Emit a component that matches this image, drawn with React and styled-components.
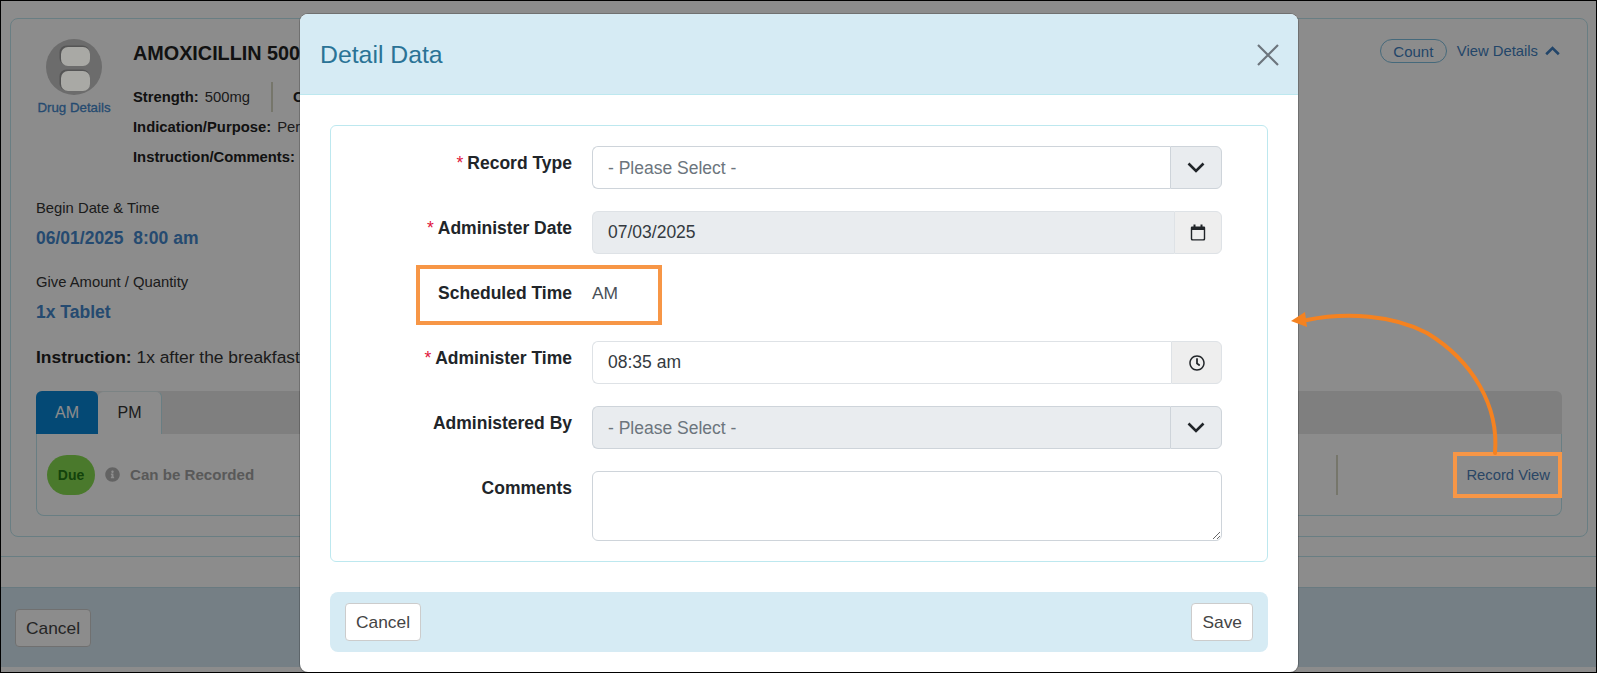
import React from "react";
import styled, { createGlobalStyle } from "styled-components";
import { FaInfoCircle, FaRegClock } from "react-icons/fa";

const GlobalStyle = createGlobalStyle`
    html, body {
        margin:0;
        padding:0;
        background:#fff;
        font-family:"Liberation Sans", Arial, sans-serif;
    }
    * {
        box-sizing:border-box;
    }
`

const Page = styled.div`
    position:relative;
    width:1597px;
    height:673px;
    overflow:hidden;
    border:1px solid #000;
    background:#fff;
    color:#212529;
    display:flex;
    flex-direction:column;
`

const Card = styled.section`
    margin:17px 8px 0 9px;
    height:519px;
    flex:none;
    padding:20px 25px 0;
    border:1px solid #bfe6ee;
    border-radius:8px;
`

const CardTop = styled.div`
    display:flex;
    align-items:flex-start;
    justify-content:space-between;
`

const DrugColumn = styled.div`
    width:76px;
    flex:none;
    display:flex;
    flex-direction:column;
    align-items:center;
    gap:5px;
`

const DrugPicture = styled.svg`
    position:relative;
    z-index:1;
`

const DrugLink = styled.a`
    font-size:13.3px;
    line-height:16px;
    white-space:nowrap;
    color:#4488cc;
    -webkit-text-stroke:0.3px #4488cc;
`

const DrugInfo = styled.div`
    flex:1;
    margin-left:21px;
`

const DrugName = styled.h1`
    margin:0;
    height:43px;
    font-size:19.8px;
    line-height:28px;
    font-weight:bold;
    white-space:nowrap;
    color:#222;
`

const InfoLine = styled.div`
    height:30px;
    display:flex;
    align-items:center;
    font-size:14.8px;
    gap:6px;
    color:#333;

    b {
        color:#222;
    }
`

const InfoDivider = styled.span`
    width:2px;
    height:30px;
    margin:0 14px 0 15px;
    background:#d8d8c4;
`

const TopActions = styled.div`
    display:flex;
    align-items:center;
    gap:10px;
    height:24px;
    font-size:14.8px;
    color:#3f7fc0;
`

const CountPill = styled.span`
    width:67px;
    height:24px;
    display:flex;
    align-items:center;
    justify-content:center;
    font-size:15px;
    border:1px solid #7fc0e0;
    border-radius:12px;
`

const ViewDetails = styled.span`
    display:flex;
    align-items:center;
    gap:7px;
    margin-right:2px;
    color:#3f7fc0;
`

const InfoBlock = styled.div`
    margin-top:${props => props.$top}px;
`

const BlockLabel = styled.div`
    font-size:14.8px;
    line-height:20px;
    color:#333;
`

const BlockValue = styled.div`
    margin-top:9px;
    font-size:17.5px;
    line-height:22px;
    font-weight:bold;
    white-space:pre;
    color:#4488cc;
`

const Instruction = styled.div`
    margin-top:23px;
    font-size:17.4px;
    line-height:22px;
    color:#333;

    b {
        color:#222;
    }
`

const Tabs = styled.div`
    margin-top:23px;
`

const TabBar = styled.div`
    display:flex;
    height:43px;
    background:#e7e7e7;
    border-radius:6px 6px 0 0;
`

const Tab = styled.div`
    display:flex;
    align-items:center;
    justify-content:center;
    width:${props => props.$active ? "62px" : "64px"};
    font-size:16px;
    border-radius:6px 6px 0 0;
    color:${props => props.$active ? "#fff" : "#333"};
    background:${props => props.$active ? "#0886d6" : "#fff"};
    border-right:${props => props.$active ? "0" : "1px solid #bfe6ee"};
    border-top:${props => props.$active ? "0" : "1px solid #e0eef0"};
`

const TabBody = styled.div`
    height:82px;
    display:flex;
    align-items:center;
    padding:0 11px 0 10px;
    border:1px solid #bfe6ee;
    border-top:0;
    border-radius:0 0 8px 8px;
`

const DuePill = styled.span`
    width:48px;
    height:40px;
    display:flex;
    align-items:center;
    justify-content:center;
    border-radius:20px;
    font-size:14px;
    font-weight:bold;
    background:#88dd50;
    color:#237a15;
`

const StatusIcon = styled.span`
    display:flex;
    margin:0 10px 0 10px;
    font-size:15px;
    color:#b5b5b5;
`

const StatusText = styled.span`
    flex:1;
    font-size:15.1px;
    font-weight:bold;
    color:#a3a3a3;
`

const BodyDivider = styled.span`
    width:2px;
    height:40px;
    margin-right:128px;
    background:#d8d8c4;
`

const RecordLink = styled.a`
    font-size:14.8px;
    color:#4d80b8;
`

const PageRule = styled.div`
    margin-top:19px;
    flex:none;
    height:1px;
    background:#bfe6ee;
`

const PageFooter = styled.footer`
    margin-top:30px;
    height:80px;
    flex:none;
    padding:21px 14px;
    background:#d6e8f3;
    border-top:1px solid #bfdfe9;
`

const Button = styled.button`
    height:38px;
    padding:0 10px;
    font:17.35px "Liberation Sans", Arial, sans-serif;
    color:#444;
    background:#fff;
    border:1px solid #ccc;
    border-radius:4px;
`

const Backdrop = styled.div`
    position:absolute;
    inset:0;
    background:rgba(0,0,0,0.45);
`

const Modal = styled.div`
    position:absolute;
    left:299px;
    top:13px;
    width:998px;
    height:658px;
    display:flex;
    flex-direction:column;
    background:#fff;
    border-radius:8px;
    overflow:hidden;
    box-shadow:0 0 0 1px rgba(0,0,0,0.2);
`

const ModalHeader = styled.header`
    height:81px;
    flex:none;
    display:flex;
    align-items:center;
    justify-content:space-between;
    padding:2px 19px 0 20px;
    background:#d6ebf4;
    border-bottom:1px solid #bde8ef;
`

const ModalTitle = styled.h2`
    margin:0;
    font-size:24.8px;
    font-weight:normal;
    color:#2a7396;
`

const ModalBody = styled.div`
    padding:30px 30px 0;
`

const FormPanel = styled.div`
    height:437px;
    padding:20px 0 0 0;
    border:1px solid #bde8ef;
    border-radius:6px;
    display:flex;
    flex-direction:column;
    gap:22px;
`

const FormRow = styled.div`
    display:grid;
    grid-template-columns:241px 630px;
    column-gap:20px;
    min-height:${props => props.$height || 43}px;
`

const FormLabel = styled.label`
    padding-top:5px;
    font-size:17.5px;
    line-height:24px;
    font-weight:bold;
    text-align:right;
    white-space:nowrap;
    color:#212529;
`

const Required = styled.span`
    margin-right:4px;
    font-weight:normal;
    color:#e0143c;
`

const PlainValue = styled.div`
    padding-top:5px;
    font-size:17.4px;
    line-height:24px;
    color:#495057;
`

const InputGroup = styled.div`
    display:flex;
    height:43px;
`

const SelectBox = styled.select`
    flex:1;
    min-width:0;
    padding:0 15px;
    appearance:none;
    font:17.5px "Liberation Sans", Arial, sans-serif;
    color:#6c757d;
    background:${props => props.disabled ? "#e9ecef" : "#fff"};
    opacity:1;
    border:1px solid #ced4da;
    border-right:0;
    border-radius:6px 0 0 6px;
`

const TextInput = styled.input`
    flex:1;
    min-width:0;
    padding:0 15px;
    font:17.5px "Liberation Sans", Arial, sans-serif;
    color:#343a40;
    background:${props => props.$filled ? "#e9ecef" : "#fff"};
    border:1px solid #dee2e6;
    border-right:0;
    border-radius:6px 0 0 6px;
`

const Addon = styled.span`
    flex:none;
    width:${props => props.$width}px;
    display:flex;
    align-items:center;
    justify-content:center;
    color:#212529;
    background:${props => props.$select ? "#e9ecef" : "#eee"};
    border:1px solid ${props => props.$select ? "#ced4da" : "#dee2e6"};
    border-radius:0 6px 6px 0;
`

const TextArea = styled.textarea`
    display:block;
    width:630px;
    height:70px;
    font:17.4px "Liberation Sans", Arial, sans-serif;
    background:#fff;
    border:1px solid #ced4da;
    border-radius:6px;
`

const ModalFooter = styled.div`
    margin:30px 30px 0;
    height:60px;
    display:flex;
    align-items:center;
    justify-content:space-between;
    padding:0 15px;
    background:#d6ebf4;
    border-radius:8px;
`

const Highlight = styled.div`
    position:absolute;
    border:4px solid #f79646;
    left:${props => props.$left}px;
    top:${props => props.$top}px;
    width:${props => props.$width}px;
    height:${props => props.$height}px;
`

const ArrowLayer = styled.svg`
    position:absolute;
    left:0;
    top:0;
    width:1595px;
    height:671px;
    pointer-events:none;
`

const CloseIcon = () => (
    <svg width="22" height="22" viewBox="0 0 22 22">
        <path d="M1 1 L21 21 M21 1 L1 21" fill="none" stroke="#6c757d" strokeWidth="2.2" />
    </svg>
)

const ChevronDown = () => (
    <svg width="18" height="11" viewBox="0 0 18 11">
        <path d="M1.5 1.5 L9 9 L16.5 1.5" fill="none" stroke="#212529" strokeWidth="2.6" />
    </svg>
)

const ChevronUp = () => (
    <svg width="15" height="10" viewBox="0 0 15 10">
        <path d="M1.2 8.2 L7.5 2 L13.8 8.2" fill="none" stroke="currentColor" strokeWidth="2.6" />
    </svg>
)

const CalendarIcon = () => (
    <svg width="16" height="17" viewBox="0 0 16 17">
        <path d="M3.5 0.5 h2 v2 h5 v-2 h2 v2 H14 a1.2 1.2 0 0 1 1.2 1.2 V15 a1.5 1.5 0 0 1 -1.5 1.5 H2.3 A1.5 1.5 0 0 1 0.8 15 V3.7 A1.2 1.2 0 0 1 2 2.5 H3.5 Z M2.2 6 V14.4 a0.8 0.8 0 0 0 0.8 0.8 H13 a0.8 0.8 0 0 0 0.8 -0.8 V6 Z" fill="#212529" fillRule="evenodd" />
    </svg>
)

const PillImage = () => (
    <DrugPicture width="56" height="56" viewBox="0 0 56 56">
        <circle cx="28" cy="28" r="28" fill="#6c6c6c" />
        <rect x="13.5" y="6.5" width="30" height="19.5" rx="7" fill="#555" />
        <rect x="15" y="8" width="29" height="19" rx="7" fill="#a9a9a5" />
        <rect x="13.5" y="30.5" width="30" height="21" rx="7" fill="#555" />
        <rect x="15" y="32" width="29" height="20" rx="7" fill="#a9a9a5" />
    </DrugPicture>
)

const App = () => {
    return (
        <Page>
            <GlobalStyle />
            <Card>
                <CardTop>
                    <DrugColumn>
                        <PillImage />
                        <DrugLink>Drug Details</DrugLink>
                    </DrugColumn>
                    <DrugInfo>
                        <DrugName>AMOXICILLIN 500mg</DrugName>
                        <InfoLine>
                            <b>Strength:</b> 500mg
                            <InfoDivider />
                            <b>Class:</b>
                        </InfoLine>
                        <InfoLine><b>Indication/Purpose:</b> Pernicious</InfoLine>
                        <InfoLine><b>Instruction/Comments:</b> 1x</InfoLine>
                    </DrugInfo>
                    <TopActions>
                        <CountPill>Count</CountPill>
                        <ViewDetails>View Details <ChevronUp /></ViewDetails>
                    </TopActions>
                </CardTop>
                <InfoBlock $top={26}>
                    <BlockLabel>Begin Date &amp; Time</BlockLabel>
                    <BlockValue>06/01/2025  8:00 am</BlockValue>
                </InfoBlock>
                <InfoBlock $top={23}>
                    <BlockLabel>Give Amount / Quantity</BlockLabel>
                    <BlockValue>1x Tablet</BlockValue>
                </InfoBlock>
                <Instruction><b>Instruction:</b> 1x after the breakfast</Instruction>
                <Tabs>
                    <TabBar>
                        <Tab $active>AM</Tab>
                        <Tab>PM</Tab>
                    </TabBar>
                    <TabBody>
                        <DuePill>Due</DuePill>
                        <StatusIcon><FaInfoCircle /></StatusIcon>
                        <StatusText>Can be Recorded</StatusText>
                        <BodyDivider />
                        <RecordLink>Record View</RecordLink>
                    </TabBody>
                </Tabs>
            </Card>
            <PageRule />
            <PageFooter>
                <Button>Cancel</Button>
            </PageFooter>
            <Backdrop />
            <Modal>
                <ModalHeader>
                    <ModalTitle>Detail Data</ModalTitle>
                    <CloseIcon />
                </ModalHeader>
                <ModalBody>
                    <FormPanel>
                        <FormRow>
                            <FormLabel><Required>*</Required>Record Type</FormLabel>
                            <InputGroup>
                                <SelectBox defaultValue="">
                                    <option value="">- Please Select -</option>
                                </SelectBox>
                                <Addon $width={52} $select><ChevronDown /></Addon>
                            </InputGroup>
                        </FormRow>
                        <FormRow>
                            <FormLabel><Required>*</Required>Administer Date</FormLabel>
                            <InputGroup>
                                <TextInput $filled readOnly value="07/03/2025" />
                                <Addon $width={48}><CalendarIcon /></Addon>
                            </InputGroup>
                        </FormRow>
                        <FormRow>
                            <FormLabel>Scheduled Time</FormLabel>
                            <PlainValue>AM</PlainValue>
                        </FormRow>
                        <FormRow>
                            <FormLabel><Required>*</Required>Administer Time</FormLabel>
                            <InputGroup>
                                <TextInput readOnly value="08:35 am" />
                                <Addon $width={51}><FaRegClock size={16} /></Addon>
                            </InputGroup>
                        </FormRow>
                        <FormRow>
                            <FormLabel>Administered By</FormLabel>
                            <InputGroup>
                                <SelectBox disabled defaultValue="">
                                    <option value="">- Please Select -</option>
                                </SelectBox>
                                <Addon $width={52} $select><ChevronDown /></Addon>
                            </InputGroup>
                        </FormRow>
                        <FormRow $height={70}>
                            <FormLabel>Comments</FormLabel>
                            <TextArea />
                        </FormRow>
                    </FormPanel>
                </ModalBody>
                <ModalFooter>
                    <Button>Cancel</Button>
                    <Button>Save</Button>
                </ModalFooter>
            </Modal>
            <Highlight $left={415} $top={264} $width={246} $height={60} />
            <Highlight $left={1452} $top={451} $width={109} $height={46} />
            <ArrowLayer viewBox="0 0 1595 671">
                <path d="M1494 452 C1498 405 1472 360 1426 332 C1392 314 1345 311 1306 319" fill="none" stroke="#f58220" strokeWidth="4" strokeLinecap="round" />
                <path d="M1290 320 L1304 311 L1306 326 Z" fill="#f58220" />
            </ArrowLayer>
        </Page>
    );
}

export default App;
